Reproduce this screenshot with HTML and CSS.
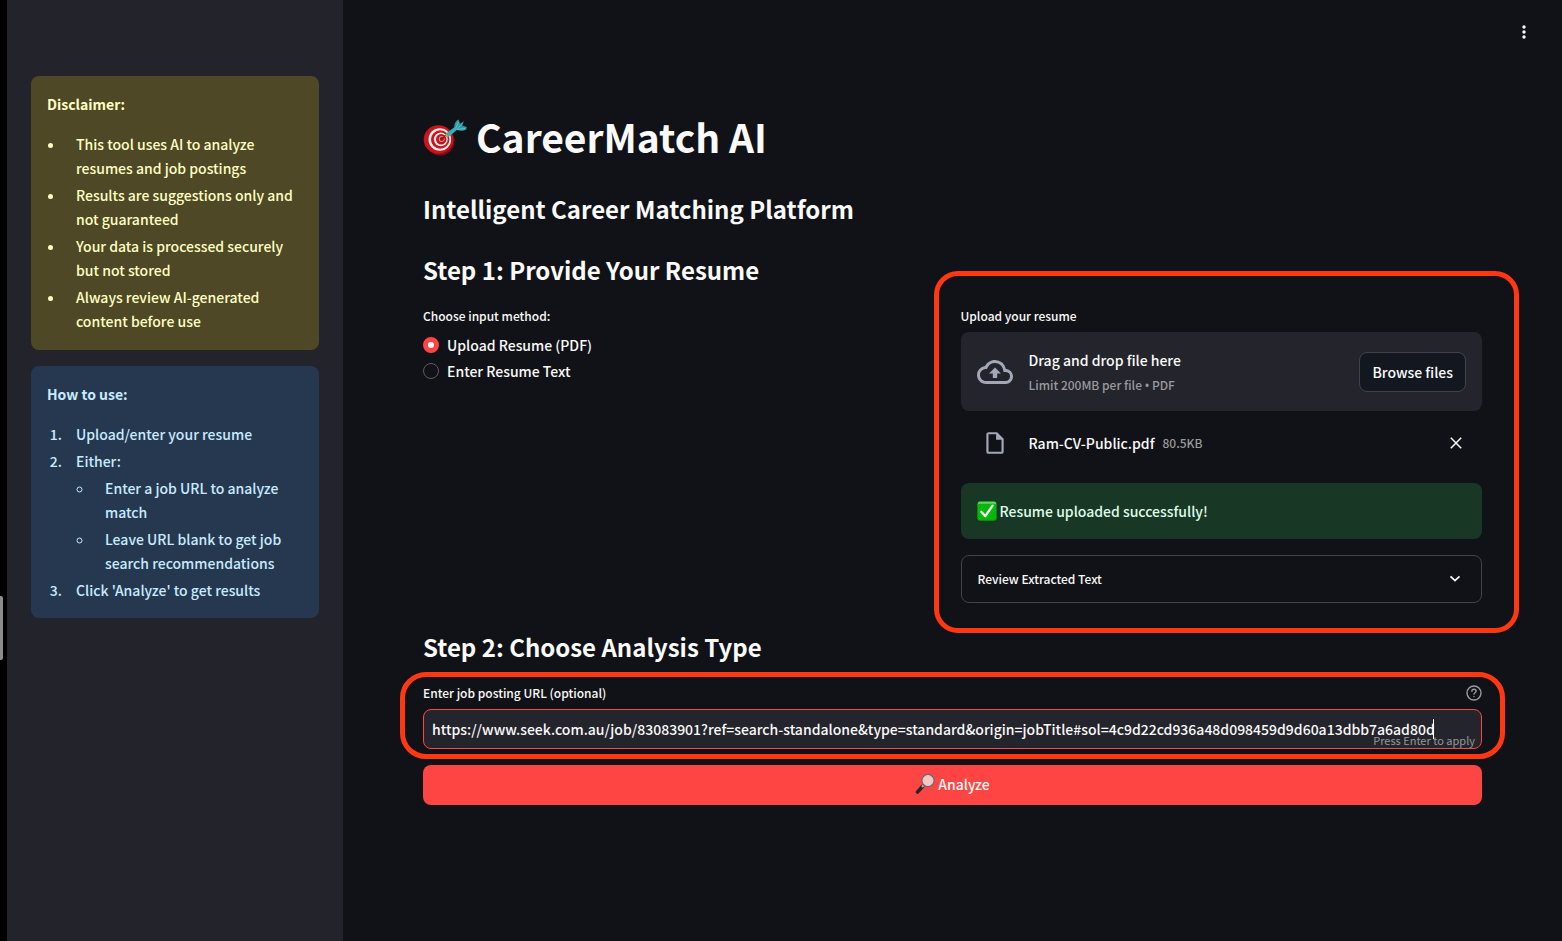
FILE: index.html
```html
<!DOCTYPE html>
<html lang="en">
<head>
<meta charset="utf-8">
<title>CareerMatch AI</title>
<meta name="viewport" content="width=device-width, initial-scale=1">
<link rel="stylesheet" href="styles.css">
</head>
<body>
<div class="app">
  <div class="edge"><div class="edge-thumb"></div></div>
  <aside class="sidebar">
    <section class="note note-warning">
      <p class="note-title">Disclaimer:</p>
      <ul>
        <li>This tool uses AI to analyze resumes and job postings</li>
        <li>Results are suggestions only and not guaranteed</li>
        <li>Your data is processed securely but not stored</li>
        <li>Always review AI-generated content before use</li>
      </ul>
    </section>
    <section class="note note-info">
      <p class="note-title">How to use:</p>
      <ol>
        <li>Upload/enter your resume</li>
        <li>Either:
          <ul>
            <li>Enter a job URL to analyze match</li>
            <li>Leave URL blank to get job search recommendations</li>
          </ul>
        </li>
        <li>Click 'Analyze' to get results</li>
      </ol>
    </section>
  </aside>

  <main class="main">
    <button class="menu" type="button" aria-label="Main menu">
      <svg width="20" height="20" viewBox="0 0 20 20" fill="currentColor"><circle cx="10" cy="5" r="1.7"/><circle cx="10" cy="10" r="1.7"/><circle cx="10" cy="15" r="1.7"/></svg>
    </button>

    <h1 class="title">
      <svg class="title-icon" viewBox="0 -2 44 40" aria-hidden="true">
        <ellipse cx="17" cy="22" rx="14.500" ry="14.500" fill="#7d0b12"/>
        <ellipse cx="15.500" cy="20.500" rx="14.800" ry="14.200" fill="#c9151d"/>
        <ellipse cx="16.800" cy="20.500" rx="11.300" ry="11.300" fill="#f3eeee"/>
        <ellipse cx="17.200" cy="20.500" rx="9.200" ry="9.200" fill="#c9151d"/>
        <ellipse cx="17.800" cy="20.300" rx="6.900" ry="6.900" fill="#f3eeee"/>
        <ellipse cx="18.200" cy="20.200" rx="5.200" ry="5.200" fill="#c0131b"/>
        <ellipse cx="18.600" cy="20" rx="2.900" ry="2.900" fill="#d98d8d"/>
        <ellipse cx="18.800" cy="20" rx="2" ry="2" fill="#b0121a"/>
        <path d="M18 20.5 24 15.500" stroke="#6e2020" stroke-width="1.2"/>
        <path d="M22 17.500 24.200 13l3.200 3.200-4.400 2.200z" fill="#e0a51d"/>
        <path d="M23.600 14.200 31.500 8l2.700 2.800-7.600 6.200c-1.600.8-3.800-1-3-2.800z" fill="#35aebb"/>
        <path d="M31.200 9C31 5 32.500 1.800 35.600.6L37 4.800 41.300 2l-2.600 4.300L43.700 8l-.4 2.400c-3 1.700-6 1.600-9.200.6z" fill="#2c98a6"/>
        <path d="M32.500 9.500 35.600 3M33.500 10l6.500-5.500M34 10.400l8-.8" stroke="#69d5dc" stroke-width=".8" fill="none"/>
      </svg>
      <span>CareerMatch AI</span>
    </h1>
    <h2 class="heading subtitle">Intelligent Career Matching Platform</h2>
    <h2 class="heading">Step 1: Provide Your Resume</h2>

    <div class="columns">
      <fieldset class="method">
        <legend class="label">Choose input method:</legend>
        <label class="option"><input type="radio" name="method" checked><span>Upload Resume (PDF)</span></label>
        <label class="option"><input type="radio" name="method"><span>Enter Resume Text</span></label>
      </fieldset>

      <section class="upload marked">
        <div class="label" id="upload-label">Upload your resume</div>
        <div class="dropzone" role="group" aria-labelledby="upload-label">
          <svg class="cloud" viewBox="0 0 24 24" aria-hidden="true"><path fill="currentColor" d="M19.350 10.040A7.490 7.490 0 0 0 12 4C9.110 4 6.600 5.640 5.350 8.040A5.994 5.994 0 0 0 0 14c0 3.310 2.690 6 6 6h13c2.760 0 5-2.240 5-5 0-2.640-2.050-4.780-4.650-4.960zM19 18H6c-2.210 0-4-1.790-4-4 0-2.050 1.530-3.760 3.560-3.970l1.070-.11.5-.95A5.469 5.469 0 0 1 12 6c2.620 0 4.880 1.860 5.390 4.430l.3 1.500 1.530.11A2.980 2.980 0 0 1 22 15c0 1.650-1.350 3-3 3zM8 13h2.550v3h2.900v-3H16l-4-4z"/></svg>
          <div class="dropzone-text">
            <span>Drag and drop file here</span>
            <small>Limit 200MB per file <span class="dot">•</span> PDF</small>
          </div>
          <button class="browse" type="button">Browse files</button>
        </div>
        <div class="file">
          <svg class="file-icon" viewBox="0 0 24 24" aria-hidden="true"><path fill="currentColor" d="M14 2H6c-1.100 0-1.990.9-1.990 2L4 20c0 1.100.89 2 1.990 2H18c1.100 0 2-.9 2-2V8l-6-6zM6 20V4h7v5h5v11H6z"/></svg>
          <span class="file-name">Ram-CV-Public.pdf</span>
          <small>80.5KB</small>
          <button class="remove" type="button" aria-label="Remove file">
            <svg width="20" height="20" viewBox="0 0 20 20" fill="none" stroke="currentColor" stroke-width="1.500"><path d="M4.800 4.800 15.200 15.200M15.200 4.800 4.800 15.200"/></svg>
          </button>
        </div>
        <div class="success">
          <svg width="20" height="20" viewBox="0 0 20 20" aria-hidden="true">
            <rect x=".3" y=".3" width="19.400" height="19.400" rx="3" fill="#0aa60a"/>
            <rect x="1" y=".8" width="18" height="3" rx="1.500" fill="#62d267"/>
            <rect x="1" y="2.800" width="18" height="16" rx="2" fill="#08b808"/>
            <path d="M4.300 10.800 8.300 15.200 15.600 4.600" fill="none" stroke="#fff" stroke-width="2.300" stroke-linecap="round" stroke-linejoin="round"/>
          </svg>
          <span>Resume uploaded successfully!</span>
        </div>
        <details class="expander">
          <summary>
            <span>Review Extracted Text</span>
            <svg width="20" height="20" viewBox="0 0 20 20" fill="none" stroke="currentColor" stroke-width="1.800" aria-hidden="true"><path d="M5.500 7.300 10 11.600 14.500 7.300"/></svg>
          </summary>
        </details>
      </section>
    </div>

    <h2 class="heading">Step 2: Choose Analysis Type</h2>
    <div class="job marked">
      <div class="job-label">
        <label class="label" for="job-url">Enter job posting URL (optional)</label>
        <svg width="16" height="16" viewBox="0 0 16 16" fill="none" stroke="currentColor" stroke-width="1.400" stroke-linecap="round" aria-hidden="true"><circle cx="8" cy="8" r="7"/><path d="M5.900 6.300c0-1.200.9-2 2.100-2s2.100.8 2.100 1.900c0 1.500-2.100 1.500-2.100 2.900M8 11.500v.1"/></svg>
      </div>
      <div class="field">
        <input id="job-url" type="text" value="https://www.seek.com.au/job/83083901?ref=search-standalone&amp;type=standard&amp;origin=jobTitle#sol=4c9d22cd936a48d098459d9d60a13dbb7a6ad80d">
        <span class="caret"></span>
        <span class="hint">Press Enter to apply</span>
      </div>
    </div>
    <button class="analyze" type="button">
      <svg width="20" height="22" viewBox="0 0 20 22" aria-hidden="true">
        <path d="M7.500 13.500 2.500 19" stroke="#26262a" stroke-width="3.600" stroke-linecap="round"/>
        <path d="M8.600 12.300 7 14" stroke="#a9a9ad" stroke-width="2.200"/>
        <circle cx="13" cy="7.500" r="6" fill="#f6c5c5" stroke="#6f686b" stroke-width="1.500"/>
        <circle cx="13" cy="7.500" r="5" fill="none" stroke="#d9cfd0" stroke-width=".8"/>
      </svg>
      <span>Analyze</span>
    </button>
  </main>
</div>
</body>
</html>
```

FILE: styles.css
```css
* { box-sizing: border-box; }

body {
  margin: 0;
  background: #111217;
  color: #fafafa;
  font: 500 14px/24px "Noto Sans CJK SC", "Noto Sans", sans-serif;
}

button, input { font: inherit; color: inherit; }
button { cursor: pointer; }
svg { display: block; flex: none; }
h1, h2, p, ul, ol { margin: 0; padding: 0; }

.app { display: flex; min-height: 100vh; }

.edge { flex: 0 0 7px; background: #000; }
.edge-thumb {
  width: 3px;
  height: 64px;
  margin-top: 596px;
  border-radius: 0 2px 2px 0;
  background: #8c8c8c;
}

/* Sidebar */
.sidebar {
  flex: 0 0 336px;
  display: flex;
  flex-direction: column;
  gap: 16px;
  padding: 76px 24px 24px;
  background: #23232b;
}
.note { padding: 16px; border-radius: 8px; }
.note-warning { padding-bottom: 17px; background: #4e4826; color: #ffffc2; }
.note-info { background: #263850; color: #c7ebff; }
.note-title { margin-bottom: 16px; font-weight: 700; }
.note li { margin: 3px 0 0 18px; padding-left: 11px; }
.note > ul > li:first-child, .note > ol > li:first-child { margin-top: 0; }

/* Main column */
.main {
  position: relative;
  flex: 1;
  min-width: 0;
  padding: 110px 80px 80px;
}
.menu {
  position: absolute;
  top: 16px;
  right: 22px;
  display: grid;
  place-items: center;
  width: 32px;
  height: 32px;
  padding: 0;
  border: 0;
  background: none;
}
.title {
  display: flex;
  align-items: center;
  gap: 9px;
  font-size: 39px;
  font-weight: 700;
  line-height: 53px;
}
.title-icon { width: 44px; height: 40px; }
.heading {
  margin-top: 27px;
  font-size: 24px;
  font-weight: 700;
  line-height: 34px;
}
.subtitle { margin-top: 29px; }
.label { padding: 0; font-size: 12px; }

.columns { display: flex; gap: 16px; margin-top: 17px; }
.columns > * { flex: 1 1 0; min-width: 0; }

.method { margin: 0; padding: 0; border: 0; }
.method .label { margin-bottom: 5px; }
.option { display: flex; align-items: center; gap: 8px; margin-bottom: 2px; }
.option input {
  appearance: none;
  width: 16px;
  height: 16px;
  margin: 0;
  border: 1px solid #5c5d62;
  border-radius: 50%;
}
.option input:checked { border: 5px solid #ff4444; background: #fafafa; }

/* Red outline drawn round a highlighted group */
.marked { position: relative; }
.marked::before {
  content: "";
  position: absolute;
  inset: -33px -37px -30px -27px;
  border: 5px solid #ff3812;
  border-radius: 24px;
  pointer-events: none;
}
.job.marked::before { inset: -9px -23px -10px -23px; border-radius: 26px; }

/* Uploader */
.upload .label { margin-bottom: 4px; }
.dropzone {
  display: flex;
  align-items: center;
  padding: 14px 16px;
  border-radius: 8px;
  background: #24242c;
}
.cloud { width: 36px; height: 36px; margin-right: 16px; color: #a3a8b8; }
.dropzone-text { flex: 1; display: flex; flex-direction: column; gap: 1px; padding-top: 2px; }
small { color: #9a9a9e; font-size: 12px; }
.dot { font-family: "Noto Sans", sans-serif; line-height: 1; }
.browse {
  height: 40px;
  padding: 0 12px;
  border: 1px solid #42434a;
  border-radius: 8px;
  background: #131720;
}
.file {
  display: flex;
  align-items: center;
  height: 64px;
  padding: 0 16px;
}
.file-icon { width: 26px; height: 26px; margin: 0 21px 0 5px; color: #a3a8b8; }
.file-name { margin-right: 8px; }
.remove { margin-left: auto; padding: 0; border: 0; background: none; }
.success {
  display: flex;
  align-items: center;
  gap: 3px;
  margin-top: 8px;
  padding: 16px;
  border-radius: 8px;
  background: #193725;
  color: #dffde9;
}
.expander { margin-top: 16px; border: 1px solid #41424a; border-radius: 8px; }
.expander summary {
  display: flex;
  align-items: center;
  justify-content: space-between;
  padding: 11px 16px;
  font-size: 12px;
  list-style: none;
  cursor: pointer;
}

/* Job URL */
.job { margin-top: 17px; }
.job-label { display: flex; align-items: center; justify-content: space-between; }
.job-label svg { color: #9a9a9e; }
.field { position: relative; margin-top: 4px; }
.field input {
  display: block;
  width: 100%;
  height: 40px;
  padding: 0 8px;
  border: 1px solid #ff4444;
  border-radius: 8px;
  outline: 0;
  background: #24242c;
}
.caret { position: absolute; top: 10px; right: 48px; width: 1px; height: 20px; background: #fff; }
.hint {
  position: absolute;
  right: 7px;
  bottom: 1px;
  color: #97979b;
  font-size: 11px;
  font-weight: 400;
  line-height: 16px;
}
.analyze {
  display: flex;
  align-items: center;
  justify-content: center;
  gap: 3px;
  width: 100%;
  height: 40px;
  margin-top: 16px;
  padding-bottom: 3px;
  border: 0;
  border-radius: 8px;
  background: #ff4444;
}
```
